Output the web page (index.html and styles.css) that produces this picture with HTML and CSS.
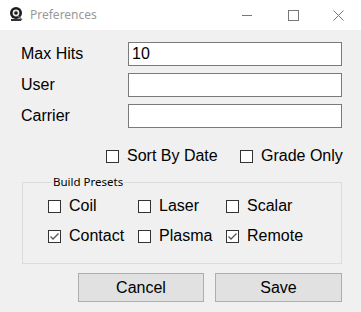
FILE: index.html
```html
<!DOCTYPE html>
<html>
<head>
<meta charset="utf-8">
<link rel="stylesheet" href="styles.css">
</head>
<body>
<div class="window">
  <div class="titlebar">
    <svg class="appicon" width="16" height="16" viewBox="0 0 16 16">
      <circle cx="8" cy="7" r="6" fill="#1a1a1a"/>
      <circle cx="8" cy="7" r="3.4" fill="#e8e8e8"/>
      <circle cx="8" cy="7" r="1.8" fill="#1a1a1a"/>
      <path d="M3 13 h10 v2 h-10 z" fill="#333"/>
      <path d="M10 10 l4 4" stroke="#666" stroke-width="1.5"/>
    </svg>
    <span class="title">Preferences</span>
    <div class="controls">
      <svg width="46" height="30" viewBox="0 0 46 30"><path d="M18 15.5 h10" stroke="#777" stroke-width="1"/></svg>
      <svg width="46" height="30" viewBox="0 0 46 30"><rect x="18.5" y="10.5" width="10" height="10" fill="none" stroke="#777" stroke-width="1"/></svg>
      <svg width="46" height="30" viewBox="0 0 46 30"><path d="M17.5 10.5 l10 10 M27.5 10.5 l-10 10" stroke="#777" stroke-width="1"/></svg>
    </div>
  </div>
  <div class="form">
    <div class="fields">
      <div class="field"><span class="label">Max Hits</span><div class="textbox">10</div></div>
      <div class="field"><span class="label">User</span><div class="textbox"></div></div>
      <div class="field"><span class="label">Carrier</span><div class="textbox"></div></div>
    </div>
    <div class="options">
      <label class="check wide"><span class="box"></span>Sort By Date</label>
      <label class="check"><span class="box"></span>Grade Only</label>
    </div>
    <fieldset class="group">
      <legend>Build Presets</legend>
      <div class="grid">
        <label class="check"><span class="box"></span>Coil</label>
        <label class="check"><span class="box"></span>Laser</label>
        <label class="check"><span class="box"></span>Scalar</label>
        <label class="check"><span class="box checked"><svg width="11" height="11" viewBox="0 0 11 11"><path d="M1.5 5.5 l2.5 2.5 l5.5 -5.5" fill="none" stroke="#555" stroke-width="1.3"/></svg></span>Contact</label>
        <label class="check"><span class="box"></span>Plasma</label>
        <label class="check"><span class="box checked"><svg width="11" height="11" viewBox="0 0 11 11"><path d="M1.5 5.5 l2.5 2.5 l5.5 -5.5" fill="none" stroke="#555" stroke-width="1.3"/></svg></span>Remote</label>
      </div>
    </fieldset>
    <div class="buttons">
      <div class="btn cancel">Cancel</div>
      <div class="btn save">Save</div>
    </div>
  </div>
</div>
</body>
</html>
```
FILE: styles.css
```css
html, body {
  margin: 0;
  padding: 0;
}
body {
  width: 361px;
  height: 312px;
  background: #f0f0f0;
  font-family: "Liberation Sans", Arial, sans-serif;
  overflow: hidden;
}
.window {
  display: flex;
  flex-direction: column;
}
.titlebar {
  height: 30px;
  background: #ffffff;
  display: flex;
  align-items: center;
}
.appicon {
  margin-left: 8px;
  margin-right: 6px;
  margin-top: -2px;
}
.title {
  font-family: "Noto Sans", "Liberation Sans", sans-serif;
  font-size: 12px;
  color: #999999;
  margin-top: -1px;
}
.controls {
  margin-left: auto;
  display: flex;
  margin-right: -1px;
}
.controls svg {
  display: block;
}
.form {
  padding: 12px 19px 0 21px;
  display: flex;
  flex-direction: column;
}
.fields {
  display: flex;
  flex-direction: column;
  gap: 7px;
}
.field {
  display: flex;
  align-items: center;
  height: 24px;
}
.label {
  width: 107px;
  font-size: 16px;
  color: #000;
}
.textbox {
  box-sizing: border-box;
  width: 214px;
  height: 24px;
  border: 1px solid #7a7a7a;
  background: #fff;
  font-size: 16px;
  line-height: 22px;
  padding-left: 3px;
  color: #000;
}
.options {
  display: flex;
  height: 20px;
  margin-top: 18px;
  padding-left: 85px;
}
.check {
  display: flex;
  align-items: center;
  font-size: 16px;
  color: #000;
  height: 20px;
  white-space: nowrap;
  flex-shrink: 0;
}
.options .wide {
  width: 134px;
}
.box {
  box-sizing: border-box;
  width: 13px;
  height: 13px;
  border: 1px solid #333;
  background: #fff;
  margin-right: 8px;
  display: flex;
  align-items: center;
  justify-content: center;
  flex-shrink: 0;
}
.box svg {
  display: block;
}
.group {
  margin: 9px 0 0 1px;
  border: 1px solid #dcdcdc;
  padding: 7px 0 17px 25px;
}
.group legend {
  font-family: "Noto Sans", "Liberation Sans", sans-serif;
  font-size: 11.5px;
  line-height: 14px;
  color: #000;
  padding: 0 1px;
  margin-left: 4px;
}
.grid {
  display: grid;
  grid-template-columns: 90px 88px auto;
  row-gap: 10px;
}
.buttons {
  display: flex;
  justify-content: flex-end;
  gap: 11px;
  margin-top: 9px;
}
.btn {
  box-sizing: border-box;
  height: 29px;
  background: #e1e1e1;
  border: 1px solid #adadad;
  font-size: 16px;
  display: flex;
  align-items: center;
  justify-content: center;
  color: #000;
}
.cancel {
  width: 126px;
}
.save {
  width: 127px;
}
```
